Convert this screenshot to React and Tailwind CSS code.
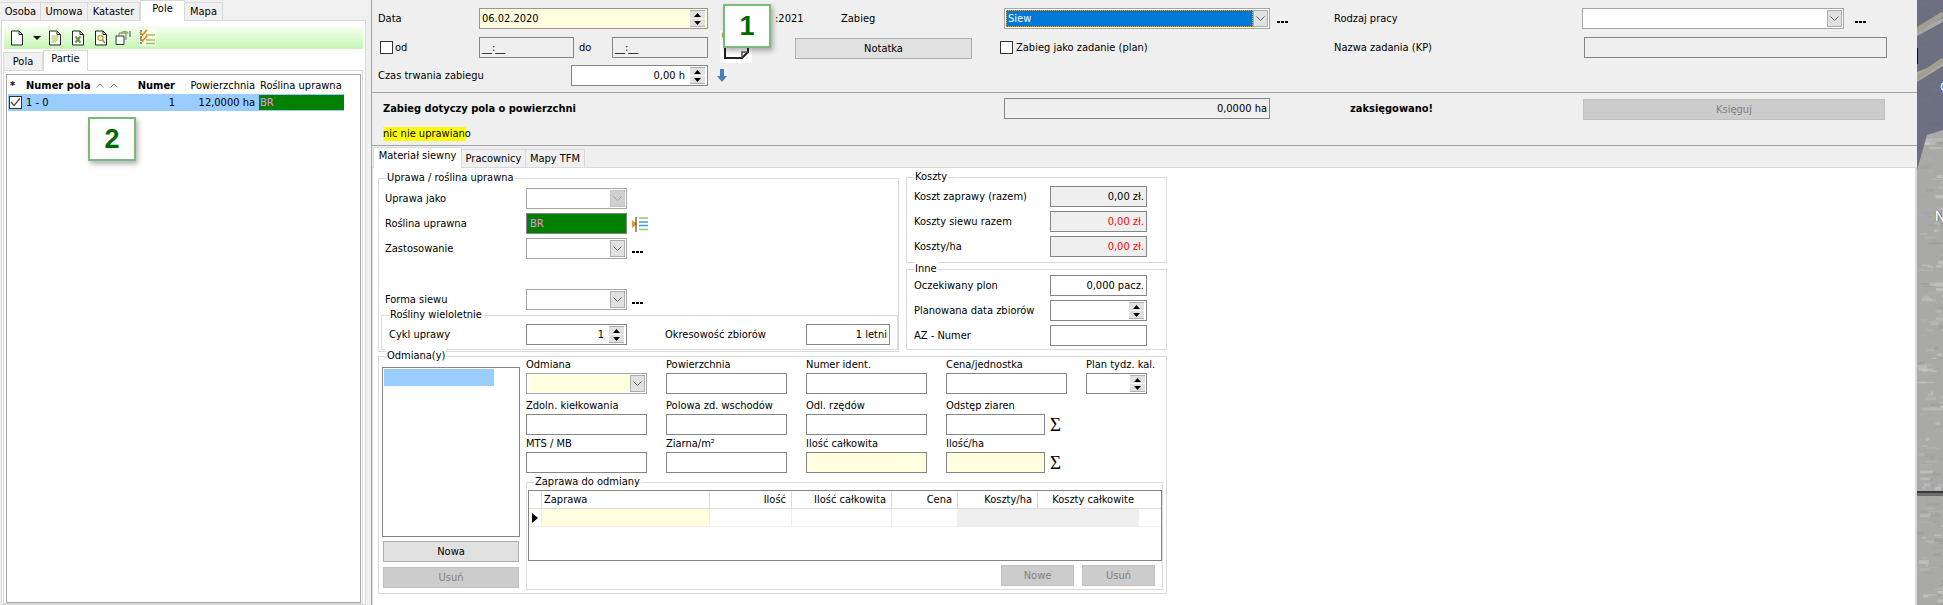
import React from "react";

const Chevron = ({ off }) => (
  <span className={`flex h-[17px] w-[15px] shrink-0 items-center justify-center border ${off ? "border-[#c4c4c4] bg-[#cfcfcf]" : "border-[#adadad] bg-[#e1e1e1]"}`}>
    <svg width="9" height="5" viewBox="0 0 9 5"><path d="M0.5 0.5 L4.5 4.5 L8.5 0.5" fill="none" stroke={off ? "#a0a0a0" : "#606060"} /></svg>
  </span>
);

const Spin = () => (
  <span className="ml-[5px] flex w-[15px] shrink-0 flex-col gap-px">
    <span className="flex h-[8px] items-center justify-center border-t border-[#b0b0b0] bg-[#e1e1e1]"><svg width="7" height="4" viewBox="0 0 7 4"><path d="M3.5 0 L7 4 L0 4 Z" fill="#000" /></svg></span>
    <span className="flex h-[8px] items-center justify-center border-b border-[#b0b0b0] bg-[#e1e1e1]"><svg width="7" height="4" viewBox="0 0 7 4"><path d="M0 0 L7 0 L3.5 4 Z" fill="#000" /></svg></span>
  </span>
);

const Select = ({ className = "", children, off, bg = "bg-white" }) => (
  <div className={`flex h-[21px] shrink-0 items-center border border-[#a6a6a6] p-px ${bg} ${className}`}>
    <div className="flex h-full min-w-0 flex-1 items-center overflow-hidden">{children}</div>
    <Chevron off={off} />
  </div>
);

const Input = ({ className = "", children }) => (
  <div className={`flex h-[21px] shrink-0 items-center border border-[#858585] px-[2px] ${className}`}>{children}</div>
);

const Dots = ({ className = "" }) => (
  <span className={`flex shrink-0 gap-px pt-[6px] ${className}`}>
    <i className="h-[2px] w-[3px] bg-black" /><i className="h-[2px] w-[3px] bg-black" /><i className="h-[2px] w-[3px] bg-black" />
  </span>
);

const Check = ({ checked }) => (
  <span className="flex h-[13px] w-[13px] shrink-0 items-center justify-center border border-[#333] bg-white">
    {checked && <svg width="11" height="9" viewBox="0 0 11 9"><path d="M1 4 L4 7.5 L10 0.5" fill="none" stroke="#444" strokeWidth="1.2" /></svg>}
  </span>
);

const Btn = ({ className = "", off, children }) => (
  <div className={`flex h-[21px] shrink-0 items-center justify-center border ${off ? "border-[#c0c0c0] bg-[#cccccc] text-[#808080]" : "border-[#adadad] bg-[#e1e1e1] text-black"} ${className}`}>{children}</div>
);

const Group = ({ title, className = "", legend = "left-[7px]", children }) => (
  <div className={`relative shrink-0 border border-[#dadada] ${className}`}>
    <span className={`absolute -top-[8px] bg-white px-px leading-[14px] ${legend}`}>{title}</span>
    {children}
  </div>
);

const Field = ({ label, className = "", children }) => (
  <div className={`shrink-0 ${className}`}>
    <div className="h-[15px] leading-[14px]">{label}</div>
    {children}
  </div>
);

const Badge = ({ n, className }) => (
  <div className={`absolute z-10 flex items-center justify-center border-2 border-[#7cba7c] bg-white font-['Liberation_Sans',sans-serif] text-[27px] font-bold text-[#006a00] shadow-[2px_3px_5px_rgba(0,0,0,0.3)] ${className}`}>{n}</div>
);

const Tab = ({ active, className = "", children }) =>
  active ? (
    <div className={`relative z-[1] flex h-[21px] shrink-0 items-start justify-center border-x border-t border-[#d9d9d9] bg-white pt-[1px] ${className}`}>{children}</div>
  ) : (
    <div className={`flex h-[18px] shrink-0 items-center justify-center border-r border-t border-[#d9d9d9] bg-[#f0f0f0] ${className}`}>{children}</div>
  );

const Page = ({ children }) => (
  <svg width="14" height="16" viewBox="0 0 14 16" className="shrink-0">
    <path d="M1.5 1 H9 L12.5 4.5 V15 H1.5 Z" fill="#fff" stroke="#222" />
    <path d="M9 1 V4.5 H12.5" fill="none" stroke="#222" />
    {children}
  </svg>
);

const Toolbar = () => (
  <div className="ml-[2px] flex h-[23px] w-[359px] items-center bg-gradient-to-b from-[#f6fff2] to-[#c6f6b4] pl-[6px]">
    <Page />
    <svg width="8" height="4" viewBox="0 0 8 4" className="ml-[9px] shrink-0"><path d="M0 0 H8 L4 4 Z" fill="#000" /></svg>
    <span className="ml-[7px]"><Page><path d="M3.5 6 H10.5 M3.5 8 H10.5 M3.5 10 H10.5 M3.5 12 H8" stroke="#a9b946" /></Page></span>
    <span className="ml-[9px]"><Page><path d="M4.5 6.5 L9.5 12.5 M9.5 6.5 L4.5 12.5" stroke="#5f9440" strokeWidth="2" /></Page></span>
    <span className="ml-[9px]"><Page><circle cx="6.5" cy="8" r="2.5" fill="none" stroke="#b8a82c" strokeWidth="1.3" /><path d="M8.5 10 L11 13" stroke="#8aa03a" strokeWidth="1.6" /></Page></span>
    <svg width="16" height="16" viewBox="0 0 16 16" className="ml-[7px] shrink-0">
      <path d="M1 6 H9 V14.5 H1 Z" fill="#fff" stroke="#333" />
      <path d="M4 6 V3 H11 V10" fill="none" stroke="#777" />
      <path d="M6 4 A4 4 0 0 1 13 3.5" fill="none" stroke="#8cb05a" strokeWidth="1.8" />
      <path d="M15 1 V7" stroke="#444" />
    </svg>
    <Checklist className="ml-[8px]" />
  </div>
);

const Checklist = ({ className = "" }) => (
  <svg width="17" height="17" viewBox="0 0 17 17" className={`shrink-0 ${className}`}>
    <rect width="17" height="17" fill="#fff" opacity="0.6" />
    <path d="M2 1 V16" stroke="#222" strokeDasharray="2 1" />
    <path d="M1 3 L3.5 6 L8 1 M1 9 L3.5 12 L8 7" fill="none" stroke="#df8a10" strokeWidth="1.8" />
    <path d="M7 6 H16 M7 11 H16 M7 14.5 H16" stroke="#a8c05a" strokeWidth="1.6" />
  </svg>
);

const LeftPanel = () => (
  <aside className="flex h-full w-[371px] shrink-0 flex-col bg-[#f0f0f0] pl-px">
    <div className="flex h-[20px] items-end">
      <Tab className="w-[40px]">Osoba</Tab>
      <Tab className="w-[47px]">Umowa</Tab>
      <Tab className="w-[52px]">Kataster</Tab>
      <Tab active className="-mb-px w-[45px]">Pole</Tab>
      <Tab className="w-[38px]">Mapa</Tab>
    </div>
    <div className="flex w-[365px] flex-1 flex-col border border-[#d9d9d9] bg-white pt-[5px]">
      <Toolbar />
      <div className="ml-px mt-px flex h-[20px] items-end">
        <Tab className="w-[40px] border-l">Pola</Tab>
        <Tab active className="-mb-px w-[45px]">Partie</Tab>
      </div>
      <div className="ml-px w-[360px] flex-1 border border-[#d9d9d9] pl-[2px] pr-px pt-[3px]">
        <div className="h-full border border-[#a6a6a6] pl-px pt-[3px]">
          <div className="flex h-[15px] items-center">
            <span className="w-[18px] pl-[2px] font-bold">*</span>
            <span className="flex w-[105px] items-center font-bold">
              Numer pola
              <svg width="27" height="5" viewBox="0 0 27 5" className="ml-[5px]"><path d="M0.5 4.5 L4 1 L7.5 4.5 M14.5 4.5 L18 1 L21.5 4.5" fill="none" stroke="#777" /></svg>
            </span>
            <span className="w-[44px] text-right font-bold">Numer</span>
            <span className="w-[80px] text-right">Powierzchnia</span>
            <span className="ml-[5px]">Roślina uprawna</span>
          </div>
          <div className="mt-px flex h-[17px] w-[336px] items-center bg-[#99ccff]">
            <span className="flex w-[18px] pl-px"><Check checked /></span>
            <span className="w-[105px]">1 - 0</span>
            <span className="w-[44px] text-right">1</span>
            <span className="w-[80px] text-right">12,0000 ha</span>
            <span className="ml-[4px] flex h-[15px] w-[85px] items-center bg-[#008000] pl-px text-[#ff88ee]">BR</span>
          </div>
        </div>
      </div>
    </div>
    <Badge n="2" className="left-[88px] top-[117px] h-[44px] w-[48px]" />
  </aside>
);

const Header = () => (
  <div className="h-[92px] shrink-0 pl-[6px] pt-[8px]">
    <div className="flex h-[21px] items-center">
      <span className="w-[101px] shrink-0">Data</span>
      <Input className="w-[229px] justify-between !border-[#969696] bg-[#ffffe0]"><span>06.02.2020</span><Spin /></Input>
      <span className="ml-[67px] w-[66px] shrink-0">:2021</span>
      <span className="w-[163px] shrink-0">Zabieg</span>
      <Select className="w-[266px]">
        <span className="flex h-full w-full items-center border border-dotted border-[#e0a030] bg-[#0078d7] pl-px text-white">Siew</span>
      </Select>
      <Dots className="ml-[7px]" />
      <span className="ml-[46px] w-[248px] shrink-0">Rodzaj pracy</span>
      <Select className="w-[262px]" />
      <Dots className="ml-[11px]" />
    </div>
    <div className="mt-[8px] flex h-[21px] items-center">
      <span className="ml-[2px] w-[99px] shrink-0"><span className="flex items-center gap-[2px]"><Check />od</span></span>
      <Input className="w-[95px]">__:__</Input>
      <span className="ml-[5px] w-[33px] shrink-0">do</span>
      <Input className="w-[96px]">__:__</Input>
      <svg width="32" height="33" viewBox="0 0 32 33" className="mb-[2px] ml-[12px] shrink-0 bg-white">
        <circle cx="5" cy="5" r="3.5" fill="#9cbd5e" />
        <path d="M5 6 V28 H22 L28 22 V2" fill="none" stroke="#222" strokeWidth="2" />
        <path d="M22 28 V22 H28" fill="none" stroke="#555" strokeWidth="1.5" />
      </svg>
      <Btn className="ml-[43px] mt-[2px] w-[177px]">Notatka</Btn>
      <span className="ml-[28px] flex w-[334px] shrink-0 items-center gap-[3px]"><Check />Zabieg jako zadanie (plan)</span>
      <span className="w-[250px] shrink-0">Nazwa zadania (KP)</span>
      <Input className="w-[303px]" />
    </div>
    <div className="mt-[7px] flex h-[21px] items-center">
      <span className="w-[193px] shrink-0">Czas trwania zabiegu</span>
      <Input className="w-[137px] justify-end bg-white">0,00 h<Spin /></Input>
      <svg width="10" height="13" viewBox="0 0 10 13" className="ml-[9px] shrink-0"><path d="M3 0 H7 V7 H10 L5 13 L0 7 H3 Z" fill="#4a80b8" /></svg>
    </div>
  </div>
);

const Summary = () => (
  <div className="h-[54px] shrink-0 border-y border-[#a3a3a3] pl-[11px] pt-[5px]">
    <div className="flex h-[21px] items-center">
      <span className="w-[621px] shrink-0 font-bold">Zabieg dotyczy pola o powierzchni</span>
      <Input className="w-[266px] justify-end">0,0000 ha</Input>
      <span className="ml-[80px] w-[233px] shrink-0 font-bold">zaksięgowano!</span>
      <Btn off className="mt-[2px] w-[302px]">Księguj</Btn>
    </div>
    <div className="mt-[8px] w-[83px] bg-[#ffff00] leading-[14px] whitespace-nowrap">nic nie uprawiano</div>
  </div>
);

const Row = ({ label, className = "", labelW = "w-[141px]", children }) => (
  <div className={`flex h-[21px] items-center ${className}`}>
    <span className={`shrink-0 ${labelW}`}>{label}</span>
    {children}
  </div>
);

const Uprawa = () => (
  <Group title="Uprawa / roślina uprawna" className="h-[174px] w-[521px] pl-px pt-[9px]">
    <div className="pl-[5px]">
      <Row label="Uprawa jako"><Select off className="w-[101px]" /></Row>
      <Row label="Roślina uprawna" className="mt-[4px]">
        <Input className="w-[101px] !border-[#858585] bg-[#008000] !px-px text-[#ff88ee]"><span className="pl-[2px]">BR</span></Input>
        <svg width="16" height="16" viewBox="0 0 16 16" className="ml-[5px] shrink-0">
          <path d="M0 4 L5 8 L0 12 Z" fill="#e39a1c" />
          <path d="M4 1 V16" stroke="#222" />
          <path d="M7 2 H16 M7 13.5 H16" stroke="#a8c05a" strokeWidth="1.6" />
          <path d="M7 6 H16 M7 9.5 H16" stroke="#3f9ad6" strokeWidth="1.6" />
        </svg>
      </Row>
      <Row label="Zastosowanie" className="mt-[4px]"><Select className="w-[101px]" /><Dots className="ml-[5px]" /></Row>
      <Row label="Forma siewu" className="mt-[30px]"><Select className="w-[101px]" /><Dots className="ml-[5px]" /></Row>
    </div>
    <Group title="Rośliny wieloletnie" className="ml-px mt-[5px] h-[35px] w-[517px] pl-[7px] pt-[8px]">
      <Row label="Cykl uprawy" labelW="w-[137px]">
        <Input className="w-[101px] justify-end">1<Spin /></Input>
        <span className="ml-[38px] w-[141px] shrink-0">Okresowość zbiorów</span>
        <Input className="w-[84px] justify-end">1 letni</Input>
      </Row>
    </Group>
  </Group>
);

const Costs = () => (
  <div className="-mt-px flex w-[261px] shrink-0 flex-col gap-[6px]">
    <Group title="Koszty" className="h-[86px] pl-[7px] pt-[8px]">
      {[["Koszt zaprawy (razem)", "text-black"], ["Koszty siewu razem", "text-[#ff0000]"], ["Koszty/ha", "text-[#ff0000]"]].map(([l, c], i) => (
        <Row key={l} label={l} labelW="w-[136px]" className={i ? "mt-[4px]" : ""}>
          <Input className={`w-[97px] justify-end bg-[#efefef] ${c}`}>0,00 zł.</Input>
        </Row>
      ))}
    </Group>
    <Group title="Inne" className="h-[81px] pl-[7px] pt-[5px]">
      <Row label="Oczekiwany plon" labelW="w-[136px]"><Input className="w-[97px] justify-end">0,000 pacz.</Input></Row>
      <Row label="Planowana data zbiorów" labelW="w-[136px]" className="mt-[4px]"><Input className="w-[97px] justify-end"><Spin /></Input></Row>
      <Row label="AZ - Numer" labelW="w-[136px]" className="mt-[4px]"><Input className="w-[97px]" /></Row>
    </Group>
  </div>
);

const Sigma = () => <span className="ml-[5px] font-['Liberation_Serif',serif] text-[19px] leading-[21px]">Σ</span>;

const cols = [
  { t: "Zaprawa", w: "w-[168px]", a: "text-left pl-[2px]", bg: "bg-[#ffffe0]" },
  { t: "Ilość", w: "w-[82px]", a: "text-right pr-[5px]", bg: "" },
  { t: "Ilość całkowita", w: "w-[100px]", a: "text-right pr-[5px]", bg: "" },
  { t: "Cena", w: "w-[66px]", a: "text-right pr-[5px]", bg: "" },
  { t: "Koszty/ha", w: "w-[80px]", a: "text-right pr-[5px]", bg: "bg-[#efefef]" },
  { t: "Koszty całkowite", w: "w-[102px]", a: "text-right pr-[5px]", bg: "bg-[#efefef]" },
];

const Zaprawa = () => (
  <Group title="Zaprawa do odmiany" className="mt-[9px] h-[108px] w-[637px] pl-px pt-[7px]">
    <div className="h-[71px] w-[634px] border border-[#858585]">
      <div className="flex h-[18px] border-b border-[#dcdcdc]">
        <span className="w-[12px] shrink-0" />
        {cols.map((c) => (
          <span key={c.t} className={`shrink-0 border-l border-[#dcdcdc] leading-[17px] ${c.w} ${c.a}`}>{c.t}</span>
        ))}
      </div>
      <div className="flex h-[18px] border-b border-[#eeeeee]">
        <span className="flex w-[12px] shrink-0 items-center justify-center"><svg width="6" height="10" viewBox="0 0 6 10"><path d="M0 0 L6 5 L0 10 Z" fill="#000" /></svg></span>
        {cols.map((c) => (
          <span key={c.t} className={`shrink-0 border-l border-[#eeeeee] ${c.w} ${c.bg}`} />
        ))}
      </div>
    </div>
    <div className="mt-[4px] flex justify-end gap-[8px] pr-[7px]">
      <Btn off className="w-[73px]">Nowe</Btn>
      <Btn off className="w-[73px]">Usuń</Btn>
    </div>
  </Group>
);

const Odmiana = () => (
  <Group title="Odmiana(y)" className="mt-[4px] flex h-[238px] w-[789px] pl-[3px]">
    <div className="w-[138px] shrink-0 pt-[10px]">
      <div className="h-[170px] border border-[#858585] p-px"><div className="h-[17px] w-[110px] bg-[#99ccff]" /></div>
      <Btn className="ml-px mt-[4px] w-[136px]">Nowa</Btn>
      <Btn off className="ml-px mt-[5px] w-[136px]">Usuń</Btn>
    </div>
    <div className="ml-[6px] shrink-0 pt-px">
      <div className="flex gap-[19px]">
        <Field label="Odmiana" className="w-[121px]"><Select className="w-full"><span className="ml-[2px] h-full w-full bg-[#ffffe0]" /></Select></Field>
        <Field label="Powierzchnia" className="w-[121px]"><Input /></Field>
        <Field label="Numer ident." className="w-[121px]"><Input /></Field>
        <Field label="Cena/jednostka" className="w-[121px]"><Input /></Field>
        <Field label="Plan tydz. kal." className="w-[61px] whitespace-nowrap"><Input className="justify-end !pr-[1px]"><Spin /></Input></Field>
      </div>
      <div className="mt-[5px] flex gap-[19px]">
        <Field label="Zdoln. kiełkowania" className="w-[121px]"><Input /></Field>
        <Field label="Polowa zd. wschodów" className="w-[121px]"><Input /></Field>
        <Field label="Odl. rzędów" className="w-[121px]"><Input /></Field>
        <Field label="Odstęp ziaren" className="w-[121px]"><div className="flex"><Input className="w-[99px]" /><Sigma /></div></Field>
      </div>
      <div className="mt-[2px] flex gap-[19px]">
        <Field label="MTS / MB" className="w-[121px]"><Input /></Field>
        <Field label="Ziarna/m²" className="w-[121px]"><Input /></Field>
        <Field label="Ilość całkowita" className="w-[121px]"><Input className="bg-[#ffffe0]" /></Field>
        <Field label="Ilość/ha" className="w-[121px]"><div className="flex"><Input className="w-[99px] bg-[#ffffe0]" /><Sigma /></div></Field>
      </div>
      <Zaprawa />
    </div>
  </Group>
);

const Texture = () => {
  const rects = [];
  let s = 12345;
  const r = () => (s = (s * 1103515245 + 12345) & 0x7fffffff) / 0x7fffffff;
  for (let i = 0; i < 260; i++) {
    const y = r() * 605;
    const x = r() * 26;
    const w = 2 + r() * 14;
    const h = 1 + r() * 3;
    const v = Math.round((y < 135 ? 140 : 150) + r() * 60);
    rects.push(<rect key={i} x={x} y={y} width={w} height={h} fill={`rgb(${v},${v},${v - 2})`} opacity="0.55" />);
  }
  return (
    <div className="relative h-full w-[26px] shrink-0 overflow-hidden bg-[#a6a6a6]">
      <svg width="26" height="605" viewBox="0 0 26 605" className="block">
        <rect width="26" height="605" fill="#a9a9a8" />
        {rects}
        <path d="M0 0 H26 V18 L0 30 Z M0 36 L26 22 V62 L0 72 Z M0 82 L26 66 V130 L10 135 L0 170 Z" fill="#62667a" opacity="0.85" />
        <path d="M0 30 L26 14 M0 78 L26 60" stroke="#a39f90" strokeWidth="5" />
        <rect x="0" y="48" width="1" height="16" fill="#111" />
        <rect x="0" y="491" width="26" height="2" fill="#3a3a3a" />
        <rect x="0" y="493" width="26" height="3" fill="#6c6c6c" />
      </svg>
      <span className="absolute left-[23px] top-[80px] font-['Liberation_Sans',sans-serif] text-[13px] text-white [text-shadow:-1px_0_#2060c0]">O</span>
      <span className="absolute left-[18px] top-[209px] font-['Liberation_Sans',sans-serif] text-[14px] text-white [text-shadow:-1px_0_#e09030,1px_0_#3080d0]">N</span>
    </div>
  );
};

export default function App() {
  return (
    <div className="relative flex h-[605px] w-[1943px] overflow-hidden bg-[#efefef] font-['DejaVu_Sans_Condensed','DejaVu_Sans',sans-serif] text-[11px] leading-[14px] text-black">
      <LeftPanel />
      <main className="flex h-full w-[1546px] shrink-0 flex-col border-l border-[#a3a3a3]">
        <Header />
        <Summary />
        <div className="flex h-[21px] shrink-0 items-end">
          <Tab active className="-mb-px ml-px w-[89px] border-b-0">Materiał siewny</Tab>
          <Tab className="w-[64px]">Pracownicy</Tab>
          <Tab className="w-[59px]">Mapy TFM</Tab>
        </div>
        <div className="flex-1 border-r-2 border-l border-t border-[#d9d9d9] bg-white pl-[5px] pt-[10px] mr-0">
          <div className="flex gap-[7px]">
            <Uprawa />
            <Costs />
          </div>
          <Odmiana />
        </div>
      </main>
      <Texture />
      <Badge n="1" className="left-[723px] top-[4px] h-[44px] w-[48px]" />
    </div>
  );
}
